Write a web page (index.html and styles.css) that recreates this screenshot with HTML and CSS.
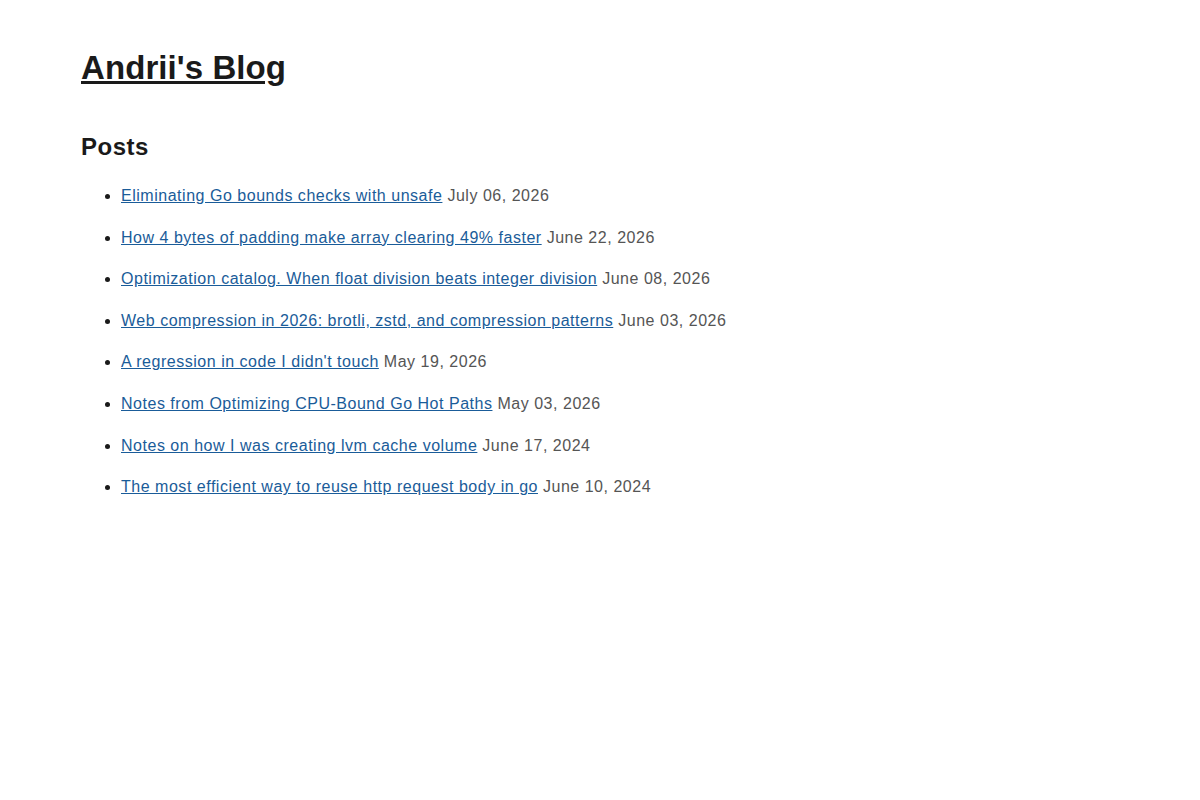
FILE: index.html
```html
<!DOCTYPE html>
<html lang="en">
<head>
  <meta charset="UTF-8" />
  <meta name="viewport" content="width=device-width, initial-scale=1.0"/>
  <title>Andrii's Blog</title>
  <link rel="stylesheet" href="styles.css">
</head>
<body>

  <header class="site-header">
    <h1><a href="#">Andrii's Blog</a></h1>
  </header>

  <main>
    <h2>Posts</h2>
    <ul class="posts">
      <li><a href="#">Eliminating Go bounds checks with unsafe</a> <span class="date">July 06, 2026</span></li>
      <li><a href="#">How 4 bytes of padding make array clearing 49% faster</a> <span class="date">June 22, 2026</span></li>
      <li><a href="#">Optimization catalog. When float division beats integer division</a> <span class="date">June 08, 2026</span></li>
      <li><a href="#">Web compression in 2026: brotli, zstd, and compression patterns</a> <span class="date">June 03, 2026</span></li>
      <li><a href="#">A regression in code I didn't touch</a> <span class="date">May 19, 2026</span></li>
      <li><a href="#">Notes from Optimizing CPU-Bound Go Hot Paths</a> <span class="date">May 03, 2026</span></li>
      <li><a href="#">Notes on how I was creating lvm cache volume</a> <span class="date">June 17, 2024</span></li>
      <li><a href="#">The most efficient way to reuse http request body in go</a> <span class="date">June 10, 2024</span></li>
    </ul>
  </main>

</body>
</html>
```

FILE: styles.css
```css
body {
  font-family: "Liberation Sans", Arial, sans-serif;
  font-size: 16px;
  letter-spacing: 0.52px;
  color: #1a1a1a;
  background: #fff;
  margin: 0;
  padding: 41px 81px;
}

.site-header h1 {
  font-size: 33px;
  margin: 8px 0 46px;
  letter-spacing: 0.08px;
}

.site-header h1 a {
  color: #1a1a1a;
}

h2 {
  font-size: 24px;
  margin: 0 0 25px;
  letter-spacing: 0.5px;
}

.posts {
  margin: 0;
  padding-left: 40px;
}

.posts li {
  line-height: 20px;
  margin-bottom: 21.6px;
}

.posts a {
  color: #1a5c99;
}

.date {
  color: #555;
}
```
